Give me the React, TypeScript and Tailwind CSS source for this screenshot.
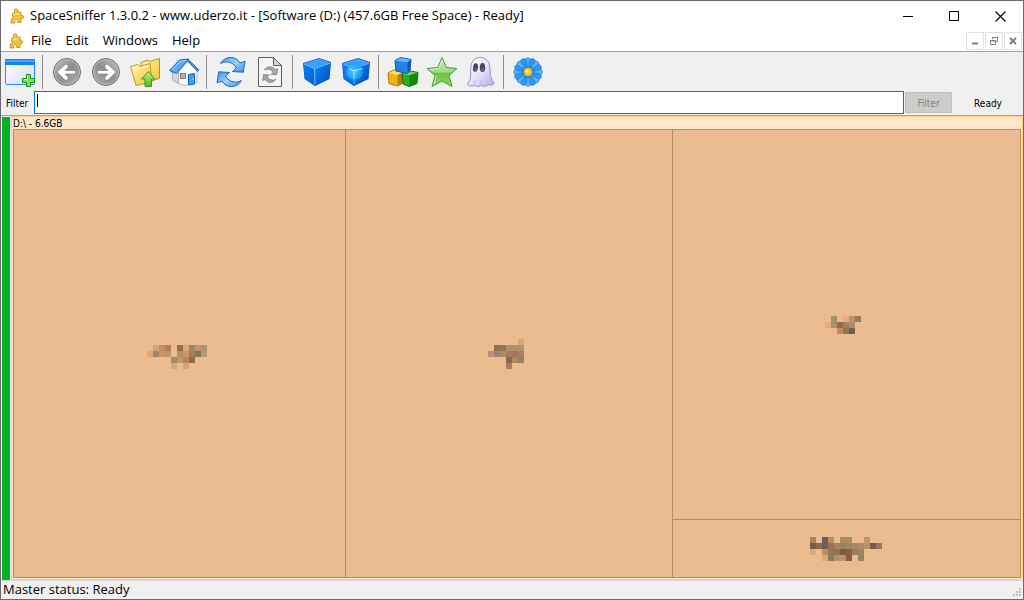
import React from 'react';

const Gradients = () => (
  <svg width="0" height="0" className="absolute" aria-hidden="true">
    <defs>
      <linearGradient id="steel" x1="0" y1="0" x2="1" y2="1">
        <stop offset="0" stopColor="#c4c4c4" />
        <stop offset="0.5" stopColor="#8e8e8e" />
        <stop offset="1" stopColor="#b4b4b4" />
      </linearGradient>
      <linearGradient id="pane" x1="0" y1="0" x2="1" y2="1">
        <stop offset="0" stopColor="#ffffff" />
        <stop offset="1" stopColor="#d8d8f8" />
      </linearGradient>
      <linearGradient id="folder" x1="0" y1="0" x2="1" y2="1">
        <stop offset="0" stopColor="#fff7b8" />
        <stop offset="1" stopColor="#ecc22c" />
      </linearGradient>
      <linearGradient id="leaf" x1="0" y1="0" x2="0" y2="1">
        <stop offset="0" stopColor="#c6f08c" />
        <stop offset="1" stopColor="#4dbb1d" />
      </linearGradient>
      <linearGradient id="sky" x1="0" y1="0" x2="1" y2="1">
        <stop offset="0" stopColor="#3f97f2" />
        <stop offset="0.5" stopColor="#9ed2ff" />
        <stop offset="1" stopColor="#2f8df0" />
      </linearGradient>
      <linearGradient id="cubeLeft" x1="0" y1="0" x2="1" y2="1">
        <stop offset="0" stopColor="#0c7df0" />
        <stop offset="1" stopColor="#0763da" />
      </linearGradient>
      <linearGradient id="cubeRight" x1="0" y1="0" x2="1" y2="1">
        <stop offset="0" stopColor="#0c8cff" />
        <stop offset="1" stopColor="#0347b4" />
      </linearGradient>
      <radialGradient id="glow">
        <stop offset="0" stopColor="#a4fbff" />
        <stop offset="0.5" stopColor="#35c4ff" stopOpacity="0.9" />
        <stop offset="1" stopColor="#0a86ff" stopOpacity="0" />
      </radialGradient>
      <linearGradient id="star" x1="0" y1="0" x2="0" y2="1">
        <stop offset="0" stopColor="#ccecbc" />
        <stop offset="0.5" stopColor="#a0da84" />
        <stop offset="0.55" stopColor="#6cc444" />
        <stop offset="1" stopColor="#8edc60" />
      </linearGradient>
      <linearGradient id="ghost" x1="0" y1="0" x2="1" y2="1">
        <stop offset="0" stopColor="#ffffff" />
        <stop offset="0.5" stopColor="#e6e4fb" />
        <stop offset="1" stopColor="#b4aee4" />
      </linearGradient>
    </defs>
  </svg>
);

const Svg = ({ children }: { children: React.ReactNode }) => (
  <svg width="32" height="32" viewBox="0 0 32 32" aria-hidden="true">
    {children}
  </svg>
);

const NewViewIcon = () => (
  <Svg>
    <rect x="1.5" y="3.5" width="29" height="25" rx="1" fill="url(#pane)" stroke="#1e90f8" />
    <rect x="1" y="3" width="30" height="6" rx="1" fill="#0b85f4" />
    <rect x="2" y="4" width="28" height="2" fill="#3ba7ff" />
    <path d="M22.5 18.5h4v4h4v4h-4v4h-4v-4h-4v-4h4z" fill="#7fe04c" stroke="#16901c" />
    <path d="M23.5 20v3.5H20" fill="none" stroke="#caf7a4" />
  </Svg>
);

const ArrowIcon = ({ flip }: { flip?: boolean }) => (
  <Svg>
    <g transform={flip ? 'matrix(-1 0 0 1 32 0)' : undefined}>
      <circle cx="16" cy="16" r="13.5" fill="url(#steel)" stroke="#6e6e6e" />
      <circle cx="16" cy="16" r="12.5" fill="none" stroke="#b9b9b9" />
      <path d="M6 16 14 8.500h3V11.500l-3 3h10.500v3.500H14l3 3v3h-3z" fill="#fff" stroke="#777" strokeWidth="0.6" />
    </g>
  </Svg>
);

const FolderUpIcon = () => (
  <Svg>
    <path d="M12 6.500 19 4l1.500 1.500L30.500 2.500v20l-17 5z" fill="url(#folder)" stroke="#b98e12" />
    <path d="M1.500 10.500 9 8.500l1.500 2L21 7.500 23 26 7 29.500z" fill="url(#folder)" stroke="#c79a1b" />
    <path d="M3 12l5.500-1.500 1.500 2 9.500-2.500" fill="none" stroke="#fffbd8" />
    <path d="M19.500 15.500 26 23h-3.500v7.500h-6.500V23h-3.500z" fill="url(#leaf)" stroke="#3c9b16" />
  </Svg>
);

const HomeIcon = () => (
  <Svg>
    <path d="M4 16l7-1v12.500l-6-3z" fill="#d5dae0" stroke="#8b9097" strokeWidth="0.7" />
    <path d="M10.500 15 20.500 5 29 15v11.500L16 29.500l-5.500-2z" fill="#fafafa" stroke="#999fa6" strokeWidth="0.7" />
    <path d="M1.500 14.500 11.500 4 20.500 3 10 16l-1.500 1.500z" fill="#5aa9f4" stroke="#1765b4" strokeLinejoin="round" />
    <path d="M4 13.800 12.500 5.200l6-.8" fill="none" stroke="#a9d6ff" />
    <path d="M20 3 31 14l-1.500 1.500L19.800 5.500z" fill="#3c8fe4" stroke="#1a62aa" strokeWidth="0.7" />
    <rect x="12.500" y="17.500" width="5" height="5" fill="#b5b5b5" stroke="#666" strokeWidth="0.8" />
    <path d="M20.500 18.500l6-1v10.500l-6 1z" fill="#3a9ffa" stroke="#1d66ad" />
    <circle cx="25" cy="23" r="0.8" fill="#cfe7ff" />
  </Svg>
);

const SwirlPaths = ({ fill, stroke }: { fill: string; stroke: string }) => {
  const half = 'M5.500 7.500C10-.5 21-.5 25 7l5-1.800-1.800 11-10.700-.7 4-3.500C17.500 5 10 4.800 5.500 7.500z';
  return (
    <>
      <path d={half} fill={fill} stroke={stroke} strokeLinejoin="round" />
      <path d={half} fill={fill} stroke={stroke} strokeLinejoin="round" transform="rotate(180 16 16)" />
    </>
  );
};

const RefreshIcon = () => (
  <Svg>
    <SwirlPaths fill="url(#sky)" stroke="#1767b8" />
  </Svg>
);

const RefreshPageIcon = () => (
  <Svg>
    <path d="M4.500 1.500h15l8 8v21h-23z" fill="#f4f4f4" stroke="#606060" />
    <path d="M19.500 1.500v8h8z" fill="#d2d2d2" stroke="#606060" />
    <g transform="translate(7.500 10) scale(0.540)">
      <SwirlPaths fill="#a6a6a6" stroke="#626262" />
    </g>
  </Svg>
);

const CubeIcon = ({ glow }: { glow?: boolean }) => (
  <Svg>
    <path d="M2 7 18 2l12 4-1.500 17L14 30 3.500 23z" fill="#0754bd" />
    <path d="M2.500 7.500 18 2.500 29.500 6.500 13.500 12z" fill="#3f9fff" />
    <path d="M2.500 7.500 13.500 12.500 14 29.500 4 22.500z" fill="url(#cubeLeft)" />
    <path d="M13.500 12.500 29.500 7 28 22.500 14 29.500z" fill="url(#cubeRight)" />
    <path d="M3 8l10.500 4.500L29 7.200M13.500 12.500 14 28" fill="none" stroke="#7dc8ff" strokeWidth="0.9" />
    {glow && (
      <>
        <circle cx="14" cy="16" r="10.500" fill="url(#glow)" />
        <path d="M9 12 19 10l4 2.500-1 7.500-7.500 4L10 20z" fill="#1aa4ff" opacity="0.6" />
        <path d="M9 12.500 14 15l8-2.500M14 15v8" fill="none" stroke="#b8f8ff" strokeWidth="0.9" />
      </>
    )}
  </Svg>
);

type BlockProps = { x: number; y: number; edge: number; top: string; left: string; right: string; line: string };

// edge is the x of the front vertical edge
const Block = ({ x, y, edge, top, left, right, line }: BlockProps) => (
  <g transform={`translate(${x} ${y})`} strokeLinejoin="round">
    <path d={`M.5 3.500 6 .5l10.500 2L15.500 13.500 ${edge} 16.500 1.500 14z`} fill={left} stroke={line} />
    <path d={`M1 3.700 6 1l10 1.700L${edge} 5.500z`} fill={top} />
    <path d={`M${edge} 5.500 16 2.700 15 13.300 ${edge} 16z`} fill={right} />
  </g>
);

const BlocksIcon = () => (
  <Svg>
    <Block x={0.5} y={13.5} edge={10} top="#ffe05a" left="#f0b41b" right="#b77f09" line="#a87808" />
    <Block x={14.5} y={14} edge={8} top="#74d64a" left="#2fae20" right="#14880f" line="#107012" />
    <Block x={7.500} y={1} edge={13} top="#6cb4fb" left="#2183ea" right="#0c56b8" line="#0d55b4" />
  </Svg>
);

const StarIcon = () => (
  <Svg>
    <path
      d="M16 1.500 20.200 11.500 31 12.500 23 19.500 26 30.500 16 25 6 30.500 9 19.500 1 12.500 11.800 11.500z"
      fill="url(#star)"
      stroke="#4a9a3a"
      strokeLinejoin="round"
    />
    <path d="M16 4.500 12.700 12.500 4 13.500M10.200 20 8 28.200" fill="none" stroke="#e2f7d7" strokeWidth="0.8" />
  </Svg>
);

const GhostIcon = () => (
  <Svg>
    <path
      d="M5.500 22C6 17 5 12 6.500 8 8 3.500 11 1.500 15.500 1.500s8 3 9 7.500c1 5 0 9 2 14 .7 2 2.500 3.500 2.500 4.500-1.500 2.500-4.500 1.500-5.500 1-2.500 2.500-5.500 2-7.500.5-2.500 2.500-5 1.500-6.500 0C6.500 31 3.500 30 2.500 28.500c0-1.500 2.500-3 3-6.500z"
      fill="url(#ghost)"
      stroke="#8e88b8"
      strokeWidth="0.9"
    />
    <path d="M10 24c-.5 2-.5 3-1 4.500M16 24v4.500M22 22c.5 3 1 4.500 1.500 6" fill="none" stroke="#c4bfe8" />
    <ellipse cx="10.500" cy="11.500" rx="2.500" ry="4.300" fill="#45465c" transform="rotate(8 10.500 11.500)" />
    <ellipse cx="17.500" cy="11.500" rx="2.700" ry="4.500" fill="#45465c" />
    <ellipse cx="10.500" cy="13.500" rx="1" ry="1.500" fill="#6d6f88" />
    <ellipse cx="17.500" cy="13.500" rx="1.100" ry="1.700" fill="#6d6f88" />
  </Svg>
);

const FlowerIcon = () => (
  <Svg>
    {Array.from({ length: 16 }, (_, i) => (
      <path
        key={i}
        d="M16 14 13.300 4C13.500 1 18.500 1 18.700 4z"
        fill={i % 2 ? '#2e9afa' : '#51b0ff'}
        stroke="#0e62ba"
        strokeWidth="0.5"
        transform={`rotate(${i * 22.5} 16 16)`}
      />
    ))}
    <circle cx="16" cy="16" r="6.500" fill="#1a80e8" opacity="0.5" />
    <circle cx="16" cy="16" r="4" fill="#ffce0c" stroke="#c5a020" strokeWidth="0.7" />
    <circle cx="15" cy="15" r="1.600" fill="#ffec70" />
  </Svg>
);

const PuzzleIcon = () => (
  <svg width="14" height="16" viewBox="0 0 14 16" aria-hidden="true">
    <path
      d="M2.500 5.500 5 5C3.500 2 4.500.8 6.200.8S8.500 2.500 7.800 4.500L11 4v3.500c1.500-.7 2.500 0 2.500 1.500s-1 2-2.500 1.500v4H7.500c.8-2-.1-3-1.300-3s-2 1-1.200 3.500H1l.5-4.500C4 11.500 4.500 8.500 2.500 8.800z"
      fill="#f3c43a"
      stroke="#bd8812"
      strokeWidth="0.8"
    />
    <path d="M3.500 6.500 7 6l3-.7M5.500 2.500l.8-.7" stroke="#fff0a0" fill="none" />
  </svg>
);

const toolGroups = [
  [{ label: 'New view', icon: <NewViewIcon /> }],
  [
    { label: 'Back', icon: <ArrowIcon /> },
    { label: 'Forward', icon: <ArrowIcon flip /> },
    { label: 'Up one level', icon: <FolderUpIcon /> },
    { label: 'Home', icon: <HomeIcon /> },
  ],
  [
    { label: 'Rescan', icon: <RefreshIcon /> },
    { label: 'Rescan file', icon: <RefreshPageIcon /> },
  ],
  [
    { label: 'Less detail', icon: <CubeIcon /> },
    { label: 'More detail', icon: <CubeIcon glow /> },
  ],
  [
    { label: 'File classes', icon: <BlocksIcon /> },
    { label: 'Tags', icon: <StarIcon /> },
    { label: 'Free space', icon: <GhostIcon /> },
  ],
  [{ label: 'Configure', icon: <FlowerIcon /> }],
];

// Censored labels, one colour per 6px tile, '' leaves the tile empty
const labelA = [
  ['', '', '', '', '', '', '', '', '', '', ''],
  ['', '#c6a87e', '#c98e63', '#ae8058', '', '#926d50', '#e4a772', '#998870', '#c9926a', '#b19270', ''],
  ['#e3a973', '#9b866b', '#d09266', '#bd9370', '', '#b0916c', '#c9976b', '#ab7a56', '#80755f', '#b59878', ''],
  ['', '', '', '', '#a08872', '#c39667', '#b88757', '#8c6b51', '', '', ''],
  ['', '', '', '', '#d6a985', '', '#d2a377', '', '', '', ''],
];

const labelB = [
  ['', '', '', '', '', '#d4a87d', ''],
  ['', '#80745a', '#94754d', '#b08f70', '#b2906a', '#b2906a', ''],
  ['#c08f6c', '#938672', '#b38a5a', '#a87b63', '#9e7462', '#a87f62', ''],
  ['', '', '', '#8a6750', '#b28655', '#938068', ''],
  ['', '', '', '#ad7a5b', '', '', ''],
];

const labelC = [
  ['', '#a99069', '', '#eaae78', '#bf936b', '#9c775d', ''],
  ['#e8ab77', '#a99069', '#906a4b', '#a57f65', '#b18e68', '', ''],
  ['', '', '#bf8b5f', '#8d7655', '#6d6056', '', ''],
];

const labelD = [
  ['#ad8159', '', '#6b5d57', '#b78c66', '', '#ad8760', '#a58d6b', '', '', '#b89870', '', ''],
  ['#795d48', '#8d6a48', '#6b5d57', '#967158', '#a78260', '#9a8365', '#9d8560', '#a08b68', '#b58870', '#b5946a', '#7b5a50', '#957468'],
  ['#d9ab7e', '', '#c08d63', '#947650', '#93714a', '#7c5c3f', '#8c5b4a', '#93805f', '#a08660', '', '', ''],
  ['', '', '#dba873', '#827c60', '#b3916b', '#b8926a', '#8f554a', '', '#958464', '', '', ''],
];

const Mosaic = ({ rows }: { rows: string[][] }) => (
  <svg width={rows[0].length * 6} height={rows.length * 6} shapeRendering="crispEdges" aria-hidden="true">
    {rows.map((row, y) =>
      row.map((color, x) => color && <rect key={`${x}-${y}`} x={x * 6} y={y * 6} width="6" height="6" fill={color} />)
    )}
  </svg>
);

const captionButton = 'flex w-[46px] items-center justify-center hover:bg-gray-200';
const mdiButton = 'flex h-[18px] w-[18px] items-center justify-center border border-[#e2e2e2] bg-white';
const cell = 'flex items-center justify-center border-[#b08d68]';

export default function App() {
  return (
    <div className="flex h-screen flex-col border border-[#6b6b6b] bg-[#f0f0f0] font-['Open_Sans',sans-serif] text-[13px] text-black">
      <Gradients />
      <header className="bg-white">
        <div className="flex h-[30px] justify-between">
          <h1 className="flex items-center gap-[6px] pl-[9px] whitespace-nowrap">
            <PuzzleIcon />
            SpaceSniffer 1.3.0.2 - www.uderzo.it - [Software (D:) (457.6GB Free Space) - Ready]
          </h1>
          <div className="flex shrink-0">
            <button className={captionButton} aria-label="Minimize">
              <svg width="11" height="11"><path d="M0 5.500h10" stroke="#000" /></svg>
            </button>
            <button className={captionButton} aria-label="Maximize">
              <svg width="11" height="11"><path d="M.5.5h9v9h-9z" fill="none" stroke="#000" /></svg>
            </button>
            <button className={captionButton} aria-label="Close">
              <svg width="11" height="11"><path d="M.5.5l10 10M10.500.5l-10 10" stroke="#000" strokeWidth="1.100" /></svg>
            </button>
          </div>
        </div>
        <div className="flex h-5 items-center justify-between">
          <nav className="flex items-center pl-2">
            <PuzzleIcon />
            <button className="ml-2">File</button>
            <button className="ml-[14px]">Edit</button>
            <button className="ml-[14px]">Windows</button>
            <button className="ml-[14px]">Help</button>
          </nav>
          <div className="flex gap-px pr-px">
            <button className={mdiButton} aria-label="Minimize view">
              <svg width="10" height="10"><path d="M2 7.500h6" stroke="#768592" strokeWidth="2" /></svg>
            </button>
            <button className={mdiButton} aria-label="Restore view">
              <svg width="10" height="10" fill="none" stroke="#768592">
                <path d="M3.500 3V1.500h5v4H7M3 1.500h6M1.500 4.500h5v4h-5zM1 5h6" />
              </svg>
            </button>
            <button className={mdiButton} aria-label="Close view">
              <svg width="10" height="10"><path d="M2 2l6 6M8 2l-6 6" stroke="#768592" strokeWidth="2" /></svg>
            </button>
          </div>
        </div>
      </header>

      <div className="flex h-10 items-center border-t border-[#a0a0a0]">
        {toolGroups.map((group, i) => (
          <React.Fragment key={i}>
            {i > 0 && <div className="mr-[5px] ml-[2px] h-[34px] w-px bg-[#8c8c8c]" />}
            {group.map((tool) => (
              <button key={tool.label} aria-label={tool.label} className="flex h-9 w-[39px] items-center pl-[3px]">
                {tool.icon}
              </button>
            ))}
          </React.Fragment>
        ))}
      </div>

      <form
        className="flex h-[25px] items-start border-b border-[#a0a0a0] font-['DejaVu_Sans_Condensed','DejaVu_Sans',sans-serif] text-[10px]"
        onSubmit={(e) => e.preventDefault()}
      >
        <label htmlFor="filter" className="w-[33px] pl-[5px] leading-[26px]">Filter</label>
        <div className="relative flex-1">
          <input id="filter" type="text" className="h-[23px] w-full border border-[#0078d7] bg-white px-1 outline-none" />
          <span className="absolute top-[3px] left-[3px] h-[13px] w-px bg-black" />
        </div>
        <button disabled className="mx-px mt-px h-[21px] w-[47px] border border-[#bfbfbf] bg-[#cccccc] pt-px text-[#838383]">
          Filter
        </button>
        <output className="w-[70px] text-center leading-[26px]">Ready</output>
      </form>

      <main className="flex min-h-0 flex-1 bg-[#f0f0f0]">
        <div className="mt-px mr-px ml-px w-2 bg-[#06b025]" />
        <section className="flex flex-1 flex-col border border-[#ffcf87] bg-[#ffe7c9] px-px pb-px">
          <h2 className="h-3 font-['DejaVu_Sans_Condensed','DejaVu_Sans',sans-serif] text-[10px] leading-[14px]">
            D:\ - 6.6GB
          </h2>
          <div className="grid flex-1 grid-cols-[333fr_327fr_348fr] border border-[#b08d68] bg-[#ebbc8f]">
            <div className={`${cell} border-r`}>
              <Mosaic rows={labelA} />
            </div>
            <div className={`${cell} border-r`}>
              <Mosaic rows={labelB} />
            </div>
            <div className="grid grid-rows-[390fr_57fr]">
              <div className={`${cell} border-b`}>
                <Mosaic rows={labelC} />
              </div>
              <div className={cell}>
                <Mosaic rows={labelD} />
              </div>
            </div>
          </div>
        </section>
      </main>

      <footer className="flex h-[19px] items-center justify-between border-t border-[#d7d7d7] pl-[2px]">
        <span>Master status: Ready</span>
        <svg width="12" height="12" className="self-end" fill="#bfbfbf" aria-hidden="true">
          <path d="M8 1h2v2H8zM5 4h2v2H5zM8 4h2v2H8zM2 7h2v2H2zM5 7h2v2H5zM8 7h2v2H8z" />
        </svg>
      </footer>
    </div>
  );
}
